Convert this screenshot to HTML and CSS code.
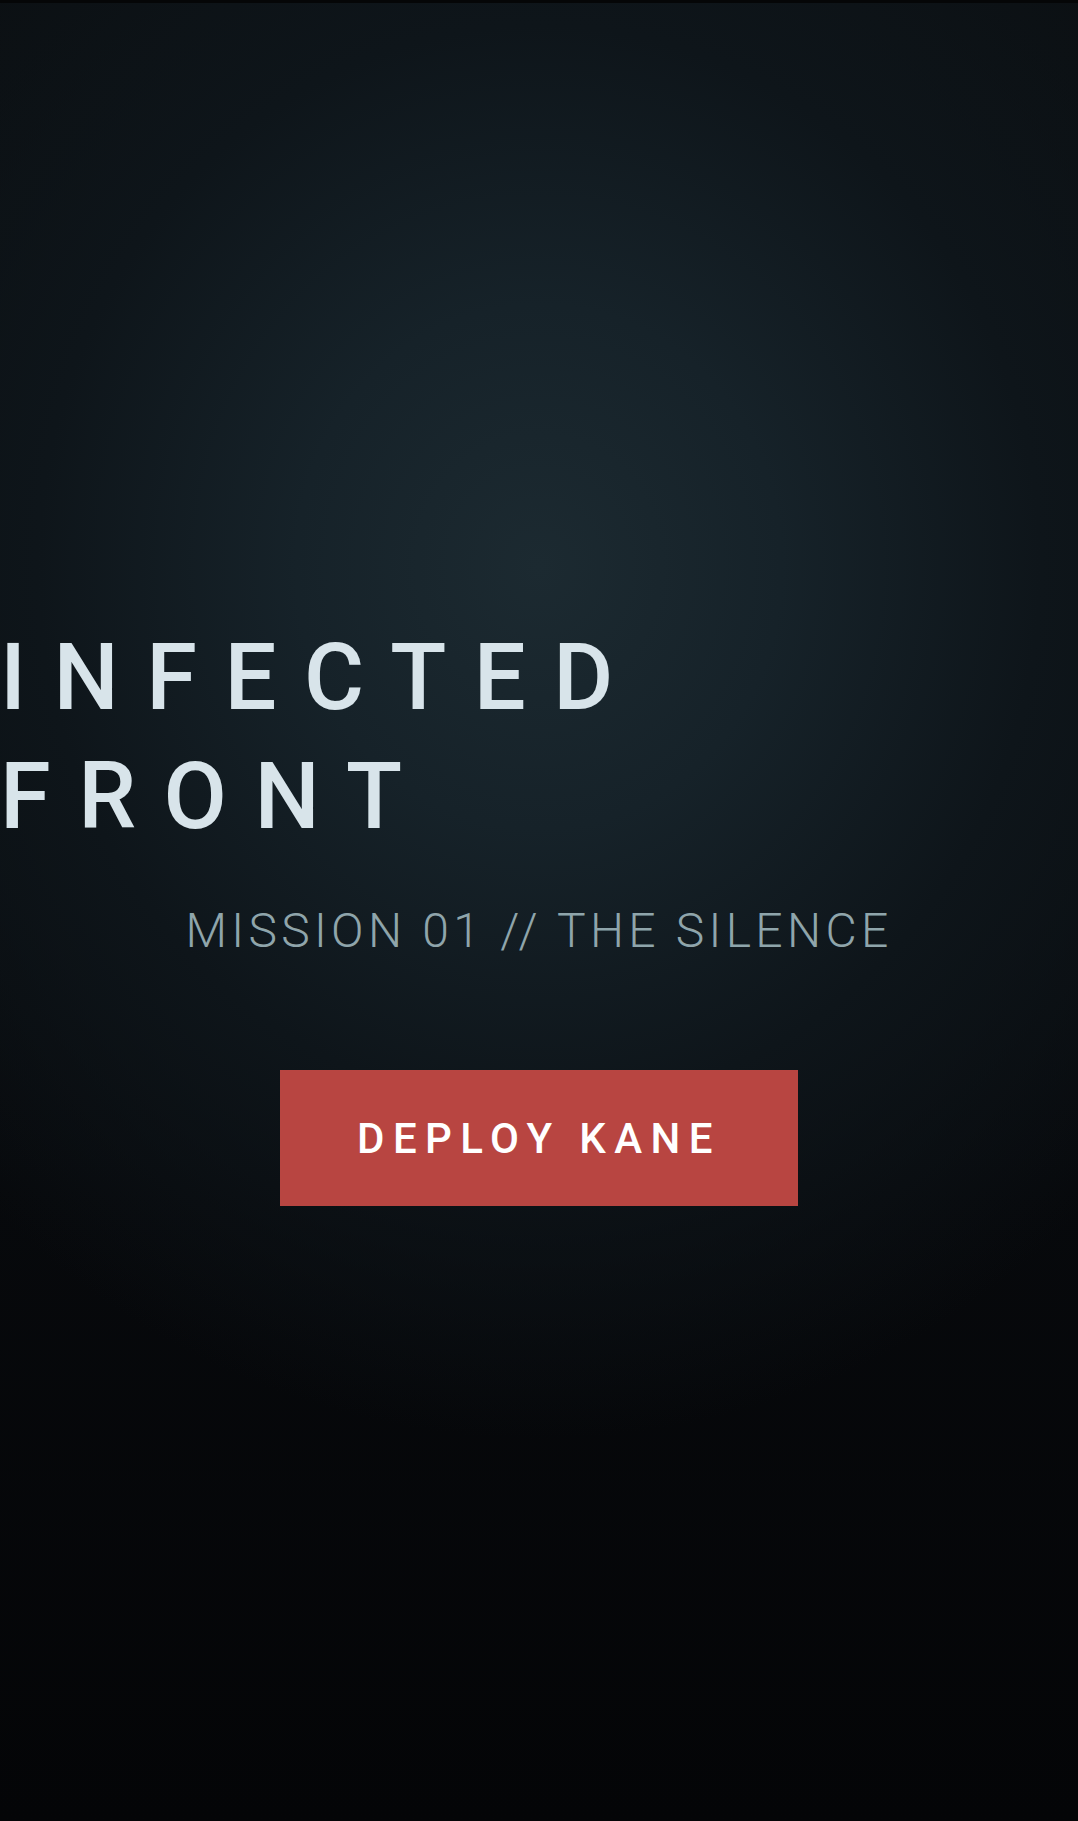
FILE: index.html
```html
<!DOCTYPE html>
<html lang="en">
<head>
<meta charset="utf-8">
<title>Infected Front</title>
<link rel="stylesheet" href="styles.css">
</head>
<body>
<main class="screen">
  <h1 class="title"><span class="title-line">INFECTED</span><span class="title-line">FRONT</span></h1>
  <p class="subtitle">MISSION 01 // THE SILENCE</p>
  <button class="deploy" type="button">DEPLOY KANE</button>
</main>
</body>
</html>
```

FILE: styles.css
```css
html, body {
  margin: 0;
  padding: 0;
  background: #040507;
}

.screen {
  min-height: 1821px;
  box-sizing: border-box;
  display: flex;
  flex-direction: column;
  align-items: center;
  justify-content: center;
  background:
    radial-gradient(ellipse 75% 48% at 50% 31%, #1c2a31 0%, #162229 30%, #0e151a 62%, rgba(10,14,18,0) 100%),
    linear-gradient(to bottom, #0b0f12 0%, #0a0e11 40%, #07090c 65%, #040507 100%);
  border-top: 3px solid #050607;
  font-family: Roboto, "Noto Sans", sans-serif;
}

.title {
  align-self: flex-start;
  margin: 0;
  font-weight: 500;
  font-size: 92px;
  line-height: 119px;
  letter-spacing: 27.5px;
  color: #d8e4ea;
}

.title-line {
  display: block;
}

.subtitle {
  margin: 46px 0 0;
  font-weight: 300;
  font-size: 48px;
  line-height: 58px;
  letter-spacing: 0.09em;
  color: #8fa5ab;
}

.deploy {
  margin-top: 110px;
  width: 518px;
  height: 136px;
  border: none;
  background: #b84541;
  color: #ffffff;
  font-family: Roboto, "Noto Sans", sans-serif;
  font-weight: 500;
  font-size: 42px;
  letter-spacing: 0.2em;
  cursor: pointer;
}
```
